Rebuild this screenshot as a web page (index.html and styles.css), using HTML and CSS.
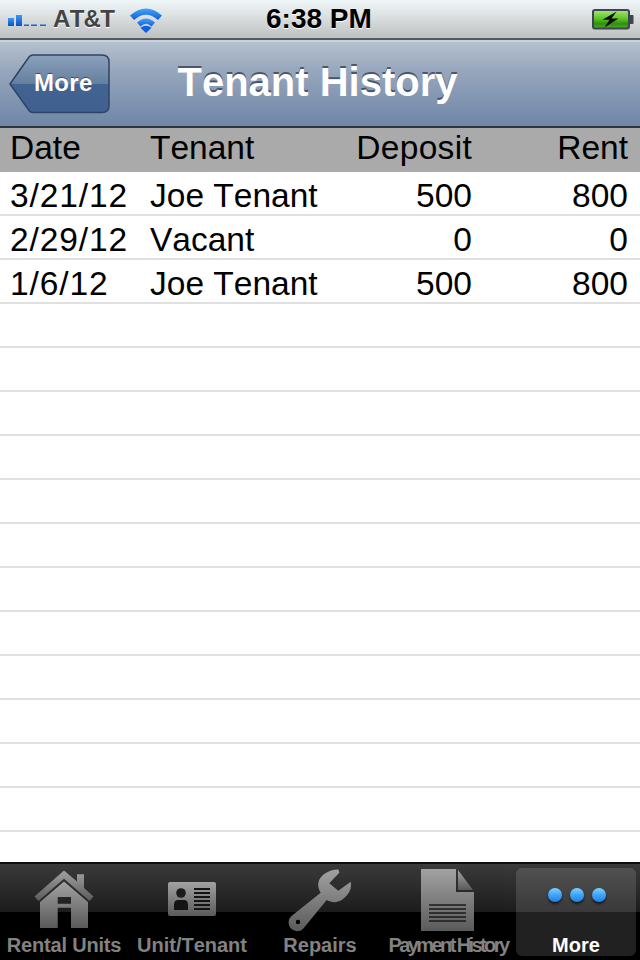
FILE: index.html
```html
<!DOCTYPE html>
<html lang="en">
<head>
<meta charset="utf-8">
<title>Tenant History</title>
<link rel="stylesheet" href="styles.css">
</head>
<body>
<div class="screen">
  <header class="status">
    <div class="status-left">
      <svg class="signal" width="40" height="12" viewBox="0 0 40 12">
        <defs><linearGradient id="sg" x1="0" y1="0" x2="0" y2="1"><stop offset="0" stop-color="#3a9bf0"/><stop offset="1" stop-color="#0a50c8"/></linearGradient></defs>
        <rect x="0" y="3" width="6" height="8" fill="url(#sg)"/>
        <rect x="8" y="0" width="6" height="11" fill="url(#sg)"/>
        <rect x="16" y="9.500" width="5" height="1.500" fill="#1a64d0"/>
        <rect x="23" y="9.500" width="6" height="1.500" fill="#1a64d0"/>
        <rect x="32" y="9.500" width="6" height="1.500" fill="#1a64d0"/>
      </svg>
      <span class="carrier">AT&amp;T</span>
      <svg class="wifi" width="34" height="28" viewBox="0 0 34 28">
        <defs><linearGradient id="wf" x1="0" y1="0" x2="0" y2="1"><stop offset="0" stop-color="#46a4f4"/><stop offset="1" stop-color="#0b5fe0"/></linearGradient></defs>
        <path d="M1 9.500Q17 -4.500 33 9.500L29 14Q17 3.500 5 14Z" fill="url(#wf)"/>
        <path d="M8 16.500Q17 8.500 26 16.500L22.500 20.500Q17 15 11.500 20.500Z" fill="url(#wf)"/>
        <path d="M17 27L11.500 21.800Q17 17.500 22.500 21.800Z" fill="#0b5fe0"/>
      </svg>
    </div>
    <div class="clock">6:38 PM</div>
    <svg class="battery" width="42" height="21" viewBox="0 0 42 21">
      <defs><linearGradient id="bg" x1="0" y1="0" x2="0" y2="1"><stop offset="0" stop-color="#a8e67c"/><stop offset=".45" stop-color="#5fc826"/><stop offset=".75" stop-color="#2f8f10"/><stop offset="1" stop-color="#52ae22"/></linearGradient></defs>
      <rect x="1" y="1" width="36" height="18.500" rx="2" fill="url(#bg)" stroke="#3d4452" stroke-width="2"/>
      <path d="M38 6h2.500a1 1 0 0 1 1 1v7a1 1 0 0 1-1 1H38Z" fill="#3d4452"/>
      <path d="M24.700 2.500L10.500 10.800H17.500L12.500 18.500L26.500 9.500H19.500Z" fill="#0a0a0a"/>
    </svg>
  </header>

  <nav class="navbar">
    <a class="back">
      <svg class="back-shape" width="102" height="60" viewBox="0 0 102 60">
        <defs><linearGradient id="bk" x1="0" y1="0" x2="0" y2="1"><stop offset="0" stop-color="#8ea1bc"/><stop offset=".5" stop-color="#62809f"/><stop offset=".5" stop-color="#436492"/><stop offset="1" stop-color="#3f5f90"/></linearGradient></defs>
        <path d="M1 30L20 3Q21.500 1 24 1H93Q100 1 100 8V52Q100 58.500 93 58.500H24Q21.500 58.500 20 56.500Z" fill="url(#bk)" stroke="#2f4464" stroke-width="1.500"/>
      </svg>
      <span class="back-label">More</span>
    </a>
    <h1 class="title">Tenant History</h1>
  </nav>

  <section class="table">
    <div class="row head"><span class="c-date">Date</span><span class="c-tenant">Tenant</span><span class="c-deposit">Deposit</span><span class="c-rent">Rent</span></div>
    <div class="row"><span class="c-date c-num">3/21/12</span><span class="c-tenant">Joe Tenant</span><span class="c-deposit">500</span><span class="c-rent">800</span></div>
    <div class="row"><span class="c-date c-num">2/29/12</span><span class="c-tenant">Vacant</span><span class="c-deposit">0</span><span class="c-rent">0</span></div>
    <div class="row"><span class="c-date c-num">1/6/12</span><span class="c-tenant">Joe Tenant</span><span class="c-deposit">500</span><span class="c-rent">800</span></div>
    <div class="row"></div><div class="row"></div><div class="row"></div><div class="row"></div>
    <div class="row"></div><div class="row"></div><div class="row"></div><div class="row"></div>
    <div class="row"></div><div class="row"></div><div class="row"></div><div class="row"></div>
  </section>

  <footer class="tabbar">
    <svg class="defs" width="0" height="0"><defs>
      <linearGradient id="ic" x1="0" y1="0" x2="0" y2="1"><stop offset="0" stop-color="#a2a2a2"/><stop offset="1" stop-color="#5a5a5a"/></linearGradient>
      <linearGradient id="dot" x1="0" y1="0" x2="0" y2="1"><stop offset="0" stop-color="#7fd0ff"/><stop offset=".5" stop-color="#3fa4f6"/><stop offset="1" stop-color="#1f7fe6"/></linearGradient>
    </defs></svg>
    <div class="tab">
      <svg class="icon" width="128" height="68" viewBox="0 0 128 68">
        <path fill="url(#ic)" d="M64 6.500L77 17.500V10.300H84V24L93.500 32.500L89.500 37L64 14.700L38.500 37L34.500 32.500Z"/>
        <path fill="url(#ic)" fill-rule="evenodd" d="M64 17.500L88 38V64H71V43.700H57.700V64H40V38ZM57.700 33H71V39.700H57.700Z"/>
      </svg>
      <span class="label label-rental">Rental Units</span>
    </div>
    <div class="tab">
      <svg class="icon" width="128" height="68" viewBox="0 0 128 68">
        <path fill="url(#ic)" d="M42 18H86Q88 18 88 20V50Q88 52 86 52H42Q40 52 40 50V20Q40 18 42 18Z"/>
        <circle cx="53" cy="29" r="4.800" fill="#1b1b1b"/>
        <path d="M46 46V41Q46 36 50 36H56Q60 36 60 41V46Z" fill="#141414"/>
        <path d="M66 25H82M66 29H82M66 33H82M66 37H82M66 41H82M66 45H82" stroke="#141414" stroke-width="1.800"/>
      </svg>
      <span class="label">Unit/Tenant</span>
    </div>
    <div class="tab">
      <svg class="icon" width="128" height="68" viewBox="0 0 128 68">
        <path fill="url(#ic)" fill-rule="evenodd" d="M82.500 5.500C74 5 64 11 62.500 18C61.500 22 63 26 64.700 28.700L35.500 52A8.500 8.500 0 0 0 47 65L70.700 36C76 39 82 39 87 35C93 30 96 25 94.700 17.700L82.300 26.700L73.300 19.300L83.300 8.700ZM42 55.800A2.200 2.200 0 1 1 42 60.200A2.200 2.200 0 1 1 42 55.800Z"/>
      </svg>
      <span class="label">Repairs</span>
    </div>
    <div class="tab">
      <svg class="icon" width="128" height="68" viewBox="0 0 128 68">
        <path fill="url(#ic)" d="M37 5H72V28H90V67H37Z"/>
        <path fill="url(#ic)" d="M74 6L89 26H74Z"/>
        <path d="M45 41H82M45 45H82M45 49H82M45 53H82M45 57H82" stroke="#1b1b1b" stroke-width="1.300"/>
      </svg>
      <span class="label label-tight">Payment History</span>
    </div>
    <div class="tab tab-active">
      <svg class="icon icon-dots" width="128" height="68" viewBox="0 0 128 68">
        <circle cx="43" cy="31" r="7" fill="url(#dot)"/>
        <circle cx="65" cy="31" r="7" fill="url(#dot)"/>
        <circle cx="87" cy="31" r="7" fill="url(#dot)"/>
      </svg>
      <span class="label">More</span>
    </div>
  </footer>
</div>
</body>
</html>
```
FILE: styles.css
```css
* { box-sizing: border-box; }
html, body { margin: 0; padding: 0; background: #fff; }
body { font-family: "Liberation Sans", Arial, sans-serif; font-kerning: none; }
.screen { width: 640px; height: 960px; overflow: hidden; display: flex; flex-direction: column; }

.status {
  height: 40px; flex: none; position: relative;
  display: flex; align-items: center; justify-content: space-between;
  padding: 0 6px 0 8px;
  background: linear-gradient(#f0f7f9 0, #d8dcdc 50%, #bfc3c3 95%);
  border-bottom: 2px solid #555a5e;
}
.status-left { display: flex; align-items: center; }
.signal { margin-top: 4px; }
.carrier { font-size: 24px; font-weight: 700; color: #444; letter-spacing: -.7px; margin-left: 5px; text-shadow: 0 1px 0 #fff; }
.wifi { margin-left: 15px; margin-top: 1px; }
.clock { position: absolute; left: 266px; top: 3px; font-size: 28px; font-weight: 700; color: #000; line-height: 32px; text-shadow: 0 1px 0 #fff; }

.navbar {
  height: 88px; flex: none; position: relative;
  display: flex; align-items: center; justify-content: center;
  background: linear-gradient(#b4c0cf 0, #96a6bc 35%, #6f86a7 100%);
  border-top: 2px solid #c8d2dc;
  border-bottom: 2px solid #2d3540;
}
.back { position: absolute; left: 9px; top: 12px; width: 102px; height: 60px; display: flex; align-items: center; }
.back-shape { position: absolute; left: 0; top: 0; }
.back-label { position: relative; margin: 0 0 2px 25px; font-size: 24px; letter-spacing: .3px; font-weight: 700; color: #fff; text-shadow: 0 -1px 0 rgba(0,0,0,.45); }
.title { margin: 0 5px 4px 0; font-size: 40px; line-height: 48px; font-weight: 700; color: #fff; text-shadow: 0 -2px 0 rgba(40,50,70,.7); }

.table { flex: 1; min-height: 0; overflow: hidden; background: #fff; }
.row {
  height: 44px; display: flex; align-items: center;
  padding: 6px 12px 0 10px; font-size: 33.500px; color: #000;
  border-bottom: 2px solid #e0e0e0;
}
.row.head { background: #aaa; border-bottom: 0; padding: 0 12px 4px 10px; }
.c-date { width: 140px; flex: none; }
.c-num { letter-spacing: .9px; }
.c-tenant { width: 180px; flex: none; white-space: nowrap; }
.c-deposit { width: 142px; flex: none; text-align: right; }
.head .c-deposit { letter-spacing: .3px; }
.c-rent { flex: 1; text-align: right; }

.tabbar {
  height: 98px; flex: none; display: flex; align-items: stretch; padding-top: 4px;
  background: linear-gradient(#3a3a3a 0, #1c1c1c 48px, #000 48px);
  border-top: 2px solid #0d0d0d;
  position: relative;
}
.defs { position: absolute; }
.tab { width: 120px; margin: 0 4px 4px; position: relative; display: flex; flex-direction: column; align-items: center; border-radius: 6px; }
.tab-active { background: rgba(255,255,255,.13); }
.icon { flex: none; margin: -4px -4px 0; }
.icon-dots { filter: drop-shadow(0 2px 1px rgba(0,0,0,.6)); }
.label { font-size: 20px; line-height: 24px; font-weight: 700; color: #828282; white-space: nowrap; margin-top: 1px; }
.label-rental { letter-spacing: -.2px; }
.label-tight { letter-spacing: -2.600px; }
.tab-active .label { color: #fff; }
```
